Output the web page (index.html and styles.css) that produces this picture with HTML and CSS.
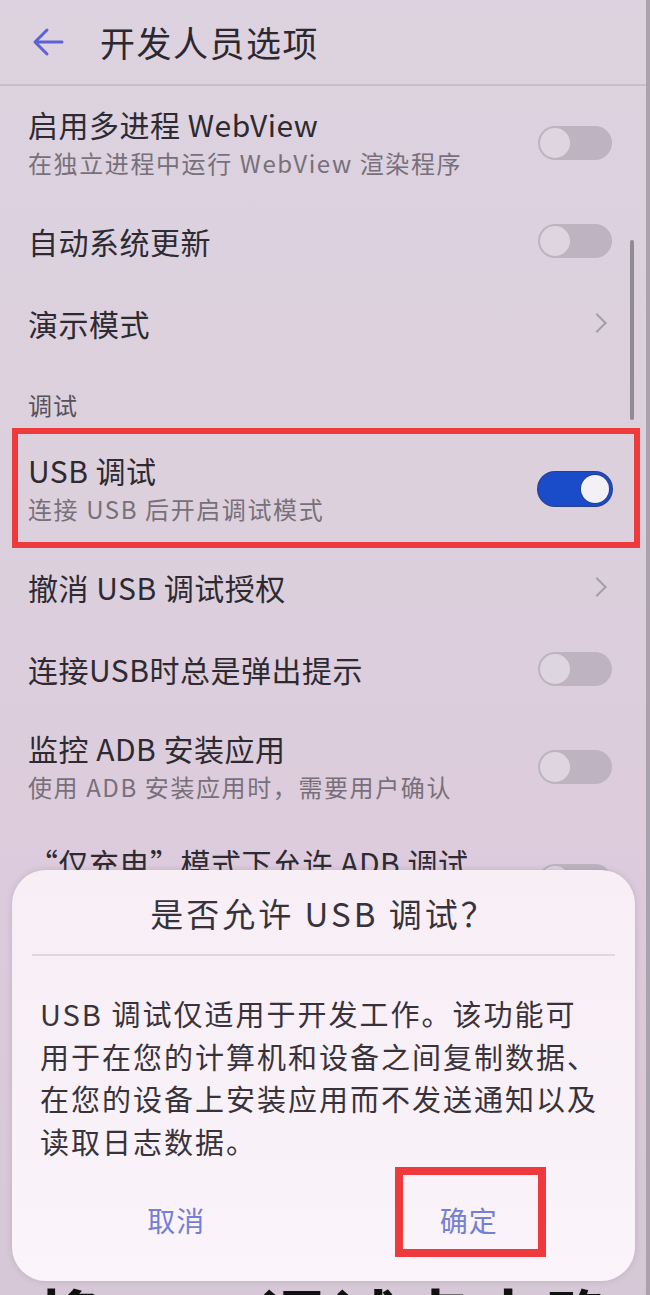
FILE: index.html
```html
<!DOCTYPE html>
<html lang="zh-CN">
<head>
<meta charset="utf-8">
<title>开发人员选项</title>
<link rel="stylesheet" href="styles.css">
</head>
<body>
<div class="screen">
  <header class="topbar">
    <svg class="back" width="32" height="30" viewBox="0 0 32 30"><path d="M30 15H3M15 3L3 15l12 12" fill="none" stroke="#5a62d6" stroke-width="3" stroke-linecap="round" stroke-linejoin="round"/></svg>
    <h1 class="title">开发人员选项</h1>
  </header>

  <ul class="list">
    <li class="row two">
      <div class="text"><div class="t">启用多进程 WebView</div><div class="s">在独立进程中运行 WebView 渲染程序</div></div>
      <span class="switch"></span>
    </li>
    <li class="row">
      <div class="text"><div class="t">自动系统更新</div></div>
      <span class="switch"></span>
    </li>
    <li class="row">
      <div class="text"><div class="t">演示模式</div></div>
      <span class="chev"></span>
    </li>
    <li class="section">调试</li>
    <li class="row two">
      <div class="text"><div class="t">USB 调试</div><div class="s">连接 USB 后开启调试模式</div></div>
      <span class="switch on"></span>
    </li>
    <li class="row">
      <div class="text"><div class="t">撤消 USB 调试授权</div></div>
      <span class="chev"></span>
    </li>
    <li class="row">
      <div class="text"><div class="t">连接USB时总是弹出提示</div></div>
      <span class="switch"></span>
    </li>
    <li class="row two">
      <div class="text"><div class="t">监控 ADB 安装应用</div><div class="s">使用 ADB 安装应用时，需要用户确认</div></div>
      <span class="switch"></span>
    </li>
    <li class="row two">
      <div class="text"><div class="t">“仅充电”模式下允许 ADB 调试</div><div class="s">在仅充电模式下允许 ADB 调试</div></div>
      <span class="switch"></span>
    </li>
  </ul>

  <div class="scrollbar"></div>
  <div class="mark mark-usb"></div>

  <div class="dialog">
    <div class="d-title">是否允许 USB 调试？</div>
    <div class="d-line"></div>
    <p class="d-body">USB 调试仅适用于开发工作。该功能可用于在您的计算机和设备之间复制数据、在您的设备上安装应用而不发送通知以及读取日志数据。</p>
    <div class="d-actions">
      <span class="btn">取消</span>
      <span class="btn">确定</span>
    </div>
  </div>
  <div class="mark mark-ok"></div>

  <div class="caption">将USB调试点击确定</div>
</div>
</body>
</html>
```

FILE: styles.css
```css
* { box-sizing: border-box; }
html, body { margin: 0; padding: 0; }
body {
  width: 650px;
  height: 1295px;
  overflow: hidden;
  background: #c9c1ca;
  font-family: "Noto Sans CJK SC", "Noto Sans", sans-serif;
}
.screen {
  position: relative;
  width: 650px;
  height: 1295px;
  overflow: hidden;
  background: linear-gradient(180deg, #ddd2df 0%, #dcd0dd 40%, #dccbdc 70%, #d6c8d6 100%);
  border-right: 4px solid #aaa3ab;
}
.topbar {
  height: 86px;
  display: flex;
  align-items: center;
  padding-left: 32px;
  border-bottom: 2px solid #c9bdc9;
}
.back { display: block; }
.title {
  margin: 0 0 0 36px;
  font-size: 35px;
  font-weight: 400;
  letter-spacing: 1.5px;
  color: #2c2830;
  line-height: 44px;
}
.list { list-style: none; margin: 0; padding: 0; }
.row {
  height: 82px;
  display: flex;
  align-items: center;
  padding: 0 34px 0 28px;
}
.row.two { height: 114px; }
.text { flex: 1; min-width: 0; }
.t {
  font-size: 30px;
  line-height: 40px;
  letter-spacing: 0.5px;
  color: #2e2a31;
  white-space: nowrap;
}
.s {
  font-size: 24px;
  line-height: 38px;
  letter-spacing: 1.6px;
  color: #77707a;
  white-space: nowrap;
}
.section {
  padding: 24px 28px 10px;
  font-size: 24px;
  line-height: 34px;
  letter-spacing: 1px;
  color: #57525a;
}
.switch {
  position: relative;
  flex: none;
  width: 74px;
  height: 34px;
  border-radius: 17px;
  background: #bdb3c1;
}
.switch::after {
  content: "";
  position: absolute;
  left: 2px;
  top: 2px;
  width: 30px;
  height: 30px;
  border-radius: 50%;
  background: #ddd5df;
}
.switch.on { background: #1a4bc9; box-shadow: 0 0 0 1px #2a3f90; }
.switch.on::after { left: auto; right: 3px; top: 3px; width: 28px; height: 28px; background: #f3f0f6; box-shadow: 0 0 0 1px #2a3f90; }
.chev {
  flex: none;
  width: 14px;
  height: 14px;
  margin-right: 8px;
  border-top: 2px solid #a59ea8;
  border-right: 2px solid #a59ea8;
  transform: rotate(45deg);
}
.scrollbar {
  position: absolute;
  left: 630px;
  top: 240px;
  width: 4px;
  height: 180px;
  border-radius: 2px;
  background: #8f8a94;
}
.mark {
  position: absolute;
  border: 6px solid #ef3a3d;
}
.mark-usb { left: 12px; top: 428px; width: 628px; height: 120px; }
.mark-ok { left: 395px; top: 1167px; width: 151px; height: 90px; border-width: 8px; }
.dialog {
  position: absolute;
  left: 12px;
  top: 870px;
  width: 623px;
  height: 411px;
  border-radius: 34px;
  background: linear-gradient(180deg, #f7eef6 0%, #f9f1f8 60%, #fbf4fb 100%);
  box-shadow: 0 0 6px rgba(120, 100, 120, 0.25);
}
.d-title {
  padding-top: 22px;
  text-align: center;
  font-size: 33px;
  line-height: 42px;
  letter-spacing: 3px;
  color: #38333b;
}
.d-line {
  height: 2px;
  margin: 20px 20px 0;
  background: #e2d6e1;
}
.d-body {
  margin: 36px 0 0 28px;
  width: 566px;
  font-size: 29px;
  line-height: 42.5px;
  letter-spacing: 2px;
  color: #38333b;
}
.d-actions {
  display: flex;
  margin-top: 28px;
  padding: 0 20px 0 18px;
}
.btn {
  flex: 1;
  text-align: center;
  height: 60px;
  line-height: 60px;
  font-size: 28px;
  letter-spacing: 1px;
  color: #7380d4;
}
.caption {
  position: absolute;
  left: 34px;
  top: 1281px;
  font-size: 66px;
  line-height: 70px;
  font-weight: 700;
  letter-spacing: 6px;
  color: #111;
  white-space: nowrap;
}
```
